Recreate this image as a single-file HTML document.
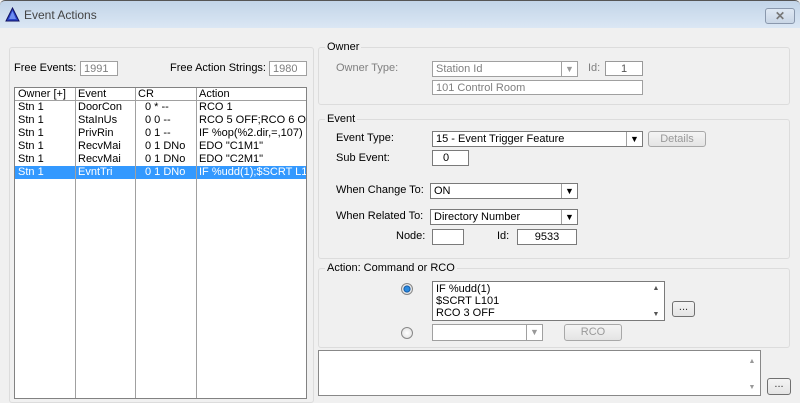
<!DOCTYPE html>
<html><head><meta charset="utf-8">
<style>
*{box-sizing:border-box;margin:0;padding:0}
body{width:800px;height:403px;overflow:hidden;background:#f0f0f0;font-family:"Liberation Sans",sans-serif;font-size:11px;color:#000;position:relative}
.a{position:absolute;white-space:nowrap}
.title{left:0;top:0;width:800px;height:28px;background:linear-gradient(#c2d4e8,#dbe7f4);border-top:1px solid #555;border-radius:5px 5px 0 0}
.grp{position:absolute;border:1px solid #dcdcdc;border-radius:3px;background:#f0f0f0}
.gl{position:absolute;background:#f0f0f0;padding:0 2px;top:-7px;left:6px}
.box{position:absolute;background:#fff;border:1px solid #7a7a7a;padding:1px 3px;line-height:13px;white-space:nowrap;overflow:hidden}
.dis{border-color:#a0a0a0;color:#7f7f7f}
.gray{color:#7f7f7f}
.arr{position:absolute;right:0;top:0;bottom:0;width:16px;border-left:1px solid #a0a0a0;font-size:9px;text-align:center;line-height:14px}
.btn{position:absolute;border:1px solid #a8a8a8;border-radius:3px;background:linear-gradient(#f4f4f4,#e4e4e4);text-align:center;color:#999;line-height:14px}
.btn2{border-color:#707070;color:#333}
.list{position:absolute;left:14px;top:87px;width:293px;height:312px;border:1px solid #828282;background:#fff;overflow:hidden}
.col{position:absolute;top:0;bottom:0;border-left:1px solid #a0a0a0}
.row{position:absolute;left:0;width:292px;height:13px;line-height:13px;white-space:nowrap;overflow:hidden}
.row span{position:absolute;white-space:nowrap}
.radio{position:absolute;width:12px;height:12px;border-radius:50%;border:1px solid #888;background:radial-gradient(#fff,#ddd)}
</style></head><body>
<div class="a title"></div>
<svg class="a" style="left:5px;top:7px" width="15" height="15"><polygon points="7.5,1 14,14 1,14" fill="#2a45c8" stroke="#101060"/><polygon points="7.5,4 11,12 4,12" fill="#6e8df0"/></svg>
<div class="a" style="left:24px;top:8px;font-size:12px;color:#444">Event Actions</div>
<div class="a" style="left:765px;top:8px;width:30px;height:16px;border:1px solid #8a98ad;border-radius:3px;background:linear-gradient(#dfe8f3,#c9d6e6);text-align:center;font-weight:bold;font-size:12px;line-height:14px;color:#777">✕</div>

<div class="grp" style="left:9px;top:47px;width:305px;height:356px"></div>
<div class="a" style="left:14px;top:62px">Free Events:</div>
<div class="box dis" style="left:80px;top:61px;width:38px;height:15px">1991</div>
<div class="a" style="left:170px;top:62px">Free Action Strings:</div>
<div class="box dis" style="left:269px;top:61px;width:38px;height:15px">1980</div>
<div class="list">
 <div class="row" style="top:0;height:13px;border-bottom:1px solid #a0a0a0;background:#fff"><span style="left:3px">Owner [+]</span><span style="left:63px">Event</span><span style="left:123px">CR</span><span style="left:184px">Action</span></div>
 <div class="row" style="top:13px"><span style="left:3px">Stn 1</span><span style="left:63px">DoorCon</span><span style="left:130px">0 * --</span><span style="left:184px">RCO 1</span></div>
 <div class="row" style="top:26px"><span style="left:3px">Stn 1</span><span style="left:63px">StaInUs</span><span style="left:130px">0 0 --</span><span style="left:184px">RCO 5 OFF;RCO 6 OFF</span></div>
 <div class="row" style="top:39px"><span style="left:3px">Stn 1</span><span style="left:63px">PrivRin</span><span style="left:130px">0 1 --</span><span style="left:184px">IF %op(%2.dir,=,107)</span></div>
 <div class="row" style="top:52px"><span style="left:3px">Stn 1</span><span style="left:63px">RecvMai</span><span style="left:130px">0 1 DNo</span><span style="left:184px">EDO "C1M1"</span></div>
 <div class="row" style="top:65px"><span style="left:3px">Stn 1</span><span style="left:63px">RecvMai</span><span style="left:130px">0 1 DNo</span><span style="left:184px">EDO "C2M1"</span></div>
 <div class="row" style="top:78px;background:#3399ff;color:#fff"><span style="left:3px">Stn 1</span><span style="left:63px">EvntTri</span><span style="left:130px">0 1 DNo</span><span style="left:184px">IF %udd(1);$SCRT L101</span></div>
 <div class="col" style="left:60px"></div><div class="col" style="left:120px"></div><div class="col" style="left:181px"></div>
</div>

<div class="grp" style="left:318px;top:47px;width:472px;height:58px"><div class="gl">Owner</div></div>
<div class="a gray" style="left:336px;top:62px">Owner Type:</div>
<div class="box dis" style="left:432px;top:61px;width:146px;height:16px">Station Id<div class="arr" style="color:#999">▼</div></div>
<div class="a gray" style="left:588px;top:62px">Id:</div>
<div class="box" style="left:605px;top:61px;width:38px;height:15px;text-align:center;color:#555;border-color:#999">1</div>
<div class="box dis" style="left:432px;top:80px;width:211px;height:15px">101 Control Room</div>

<div class="grp" style="left:318px;top:119px;width:472px;height:140px"><div class="gl">Event</div></div>
<div class="a" style="left:336px;top:132px">Event Type:</div>
<div class="box" style="left:432px;top:131px;width:211px;height:16px">15 - Event Trigger Feature<div class="arr">▼</div></div>
<div class="btn" style="left:648px;top:131px;width:58px;height:16px">Details</div>
<div class="a" style="left:336px;top:152px">Sub Event:</div>
<div class="box" style="left:432px;top:150px;width:37px;height:16px;padding-left:10px">0</div>
<div class="a" style="left:336px;top:184px">When Change To:</div>
<div class="box" style="left:430px;top:183px;width:148px;height:16px">ON<div class="arr">▼</div></div>
<div class="a" style="left:336px;top:210px">When Related To:</div>
<div class="box" style="left:430px;top:209px;width:148px;height:16px">Directory Number<div class="arr">▼</div></div>
<div class="a" style="left:396px;top:230px">Node:</div>
<div class="box" style="left:432px;top:229px;width:32px;height:16px"></div>
<div class="a" style="left:497px;top:230px">Id:</div>
<div class="box" style="left:517px;top:229px;width:60px;height:16px;text-align:center">9533</div>

<div class="grp" style="left:318px;top:268px;width:472px;height:80px"><div class="gl">Action: Command or RCO</div></div>
<div class="radio" style="left:401px;top:283px;background:radial-gradient(#2a8ae0 30%,#0b4f9a 45%,#eee 55%,#ccc)"></div>
<div class="box" style="left:432px;top:281px;width:233px;height:40px;line-height:12px;padding:1px 3px">IF %udd(1)<br>$SCRT L101<br>RCO 3 OFF<div class="a" style="right:0;top:0;bottom:0;width:16px;font-size:7px;color:#555;text-align:center;line-height:13px">▲<br><br>▼</div></div>
<div class="btn btn2" style="left:672px;top:301px;width:23px;height:16px;line-height:10px">...</div>
<div class="radio" style="left:401px;top:327px"></div>
<div class="box dis" style="left:432px;top:324px;width:111px;height:17px"><div class="arr" style="color:#999">▼</div></div>
<div class="btn" style="left:564px;top:324px;width:58px;height:17px">RCO</div>

<div class="box" style="left:318px;top:350px;width:443px;height:46px;border-color:#888"><div class="a" style="right:0;top:0;bottom:0;width:16px;font-size:7px;color:#999;text-align:center;line-height:13px;padding-top:4px">▲<br><br>▼</div></div>
<div class="btn btn2" style="left:767px;top:378px;width:24px;height:17px;line-height:10px">...</div>
</body></html>
